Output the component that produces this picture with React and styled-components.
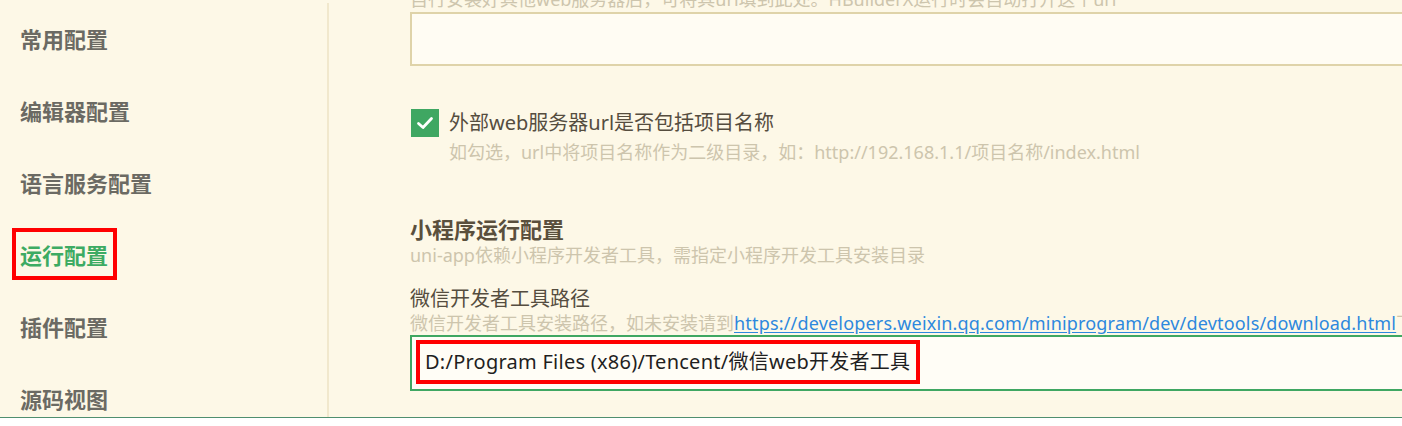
import React from "react";
import styled, { createGlobalStyle } from "styled-components";

const Global = createGlobalStyle`
  html, body { margin: 0; padding: 0; background: #ffffff; }
  body { font-family: "Noto Sans", "Noto Sans CJK SC", sans-serif; overflow: hidden; }
  #root { width: 1402px; height: 426px; overflow: hidden; }
`;

const Page = styled.div`
  width: 1402px;
  height: 426px;
  background: #ffffff;
  overflow: hidden;
`;

const Main = styled.div`
  display: flex;
  height: 417px;
  background: #fdf8e7;
  border-bottom: 1px solid #4f8f6f;
  overflow: hidden;
`;

const Sidebar = styled.nav`
  flex: 0 0 327px;
  margin-top: 3px;
  border-right: 2px solid #f1e8cd;
  display: flex;
  flex-direction: column;
  overflow: hidden;
`;

const NavItem = styled.div`
  flex: 0 0 72px;
  height: 72px;
  box-sizing: border-box;
  padding: 0 0 2px 12px;
  display: flex;
  align-items: center;
`;

const NavLabel = styled.span`
  display: inline-block;
  border: 4px solid ${(p) => (p.$active ? "#ff0000" : "transparent")};
  padding: 0 5px 0 4px;
  line-height: 44px;
  font-family: "Noto Sans CJK SC", sans-serif;
  font-size: 22px;
  font-weight: 700;
  color: ${(p) => (p.$active ? "#3dab63" : "#6b6a63")};
  white-space: nowrap;
`;

const Content = styled.section`
  flex: 1;
  min-width: 0;
  padding-left: 81px;
  overflow: hidden;
`;

const Scroller = styled.div`
  margin-top: -13px;
  display: flex;
  flex-direction: column;
  align-items: flex-start;
`;

const Hint = styled.div`
  margin-top: ${(p) => p.$mt || 0}px;
  margin-left: ${(p) => (p.$indent ? 39 : 0)}px;
  font-size: 18px;
  line-height: 24px;
  color: #cdc5ad;
  white-space: nowrap;
`;

const TextArea = styled.div`
  margin-top: 1px;
  width: 1100px;
  height: 54px;
  box-sizing: border-box;
  border: 2px solid #dfd3a9;
  background: #fffcf3;
  flex-shrink: 0;
`;

const CheckRow = styled.label`
  margin-top: 43px;
  display: flex;
  align-items: center;
  gap: 10px;
  padding-left: 1px;
  height: 28px;
`;

const CheckBox = styled.span`
  width: 28px;
  height: 28px;
  background: #3fa762;
  display: flex;
  align-items: center;
  justify-content: center;
`;

const CheckLabel = styled.span`
  font-size: 20px;
  line-height: 28px;
  color: #554d3f;
  white-space: nowrap;
`;

const SectionTitle = styled.h3`
  margin: 50px 0 0;
  font-family: "Noto Sans CJK SC", sans-serif;
  font-size: 22px;
  font-weight: 700;
  line-height: 28px;
  color: #5a4f3c;
`;

const FieldLabel = styled.div`
  margin-top: 20px;
  font-size: 20px;
  line-height: 24px;
  color: #554d3f;
  white-space: nowrap;
`;

const Link = styled.a`
  color: #2d88de;
  text-decoration: underline;
  text-underline-offset: 2px;
  letter-spacing: 0.18px;
`;

const PathInput = styled.div`
  width: 1100px;
  height: 56px;
  box-sizing: border-box;
  border: 2px solid #3fa762;
  background: #fffdf6;
  padding: 3px 4px;
  flex-shrink: 0;
`;

const Highlight = styled.span`
  display: inline-block;
  border: 4px solid #ff0000;
  padding: 0 6px 0 5px;
  line-height: 36px;
  font-size: 20px;
  letter-spacing: 0.25px;
  color: #1f1f1f;
  white-space: nowrap;
`;

const navItems = ["常用配置", "编辑器配置", "语言服务配置", "运行配置", "插件配置", "源码视图"];

export default function App() {
  return (
    <Page>
      <Global />
      <Main>
        <Sidebar>
          {navItems.map((t) => (
            <NavItem key={t}>
              <NavLabel $active={t === "运行配置"}>{t}</NavLabel>
            </NavItem>
          ))}
        </Sidebar>
        <Content>
          <Scroller>
            <Hint>自行安装好其他web服务器后，可将其url填到此处。HBuilderX运行时会自动打开这个url</Hint>
            <TextArea />
            <CheckRow>
              <CheckBox>
                <svg width="20" height="20" viewBox="0 0 20 20">
                  <path d="M3.5 10.5 L8 14.5 L16.5 5.5" fill="none" stroke="#ffffff" strokeWidth="2.8" strokeLinecap="round" strokeLinejoin="round" />
                </svg>
              </CheckBox>
              <CheckLabel>外部web服务器url是否包括项目名称</CheckLabel>
            </CheckRow>
            <Hint $indent $mt={3}>如勾选，url中将项目名称作为二级目录，如：http://192.168.1.1/项目名称/index.html</Hint>
            <SectionTitle>小程序运行配置</SectionTitle>
            <Hint $mt={1}>uni-app依赖小程序开发者工具，需指定小程序开发工具安装目录</Hint>
            <FieldLabel>微信开发者工具路径</FieldLabel>
            <Hint>
              微信开发者工具安装路径，如未安装请到
              <Link href="#">https://developers.weixin.qq.com/miniprogram/dev/devtools/download.html</Link>
              下载
            </Hint>
            <PathInput>
              <Highlight>D:/Program Files (x86)/Tencent/微信web开发者工具</Highlight>
            </PathInput>
          </Scroller>
        </Content>
      </Main>
    </Page>
  );
}
